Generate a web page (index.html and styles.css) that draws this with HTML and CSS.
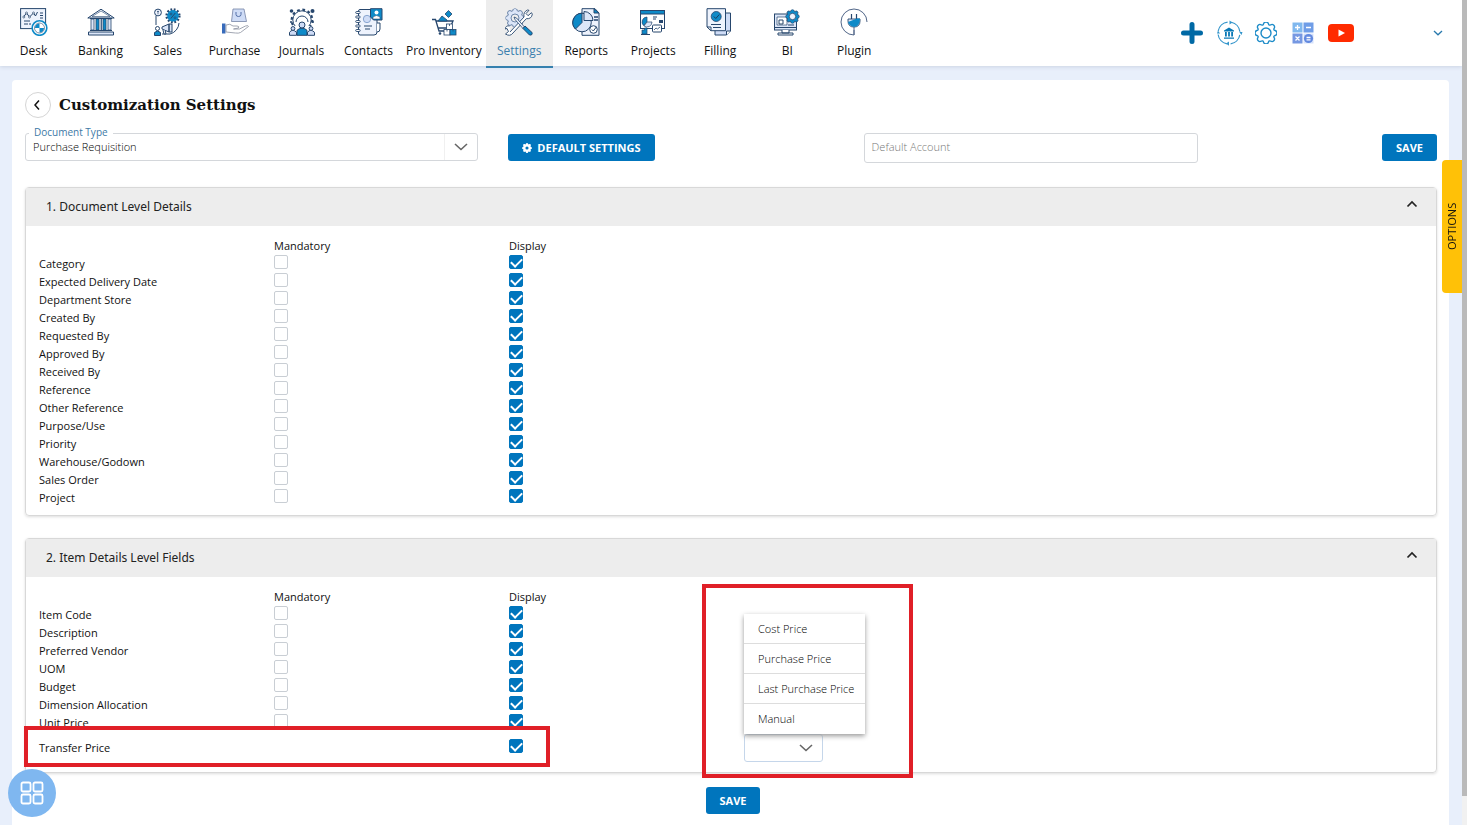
FILE: index.html
```html
<!DOCTYPE html>
<html lang="en">
<head>
<meta charset="utf-8">
<title>Customization Settings</title>
<link rel="stylesheet" href="styles.css">
</head>
<body>
<svg class="defs" aria-hidden="true">
  <symbol id="cog" viewBox="0 0 16 16"><path d="M9.796 1.343c-.527-1.79-3.065-1.79-3.592 0l-.094.319a.873.873 0 0 1-1.255.52l-.292-.16c-1.64-.892-3.433.902-2.54 2.541l.159.292a.873.873 0 0 1-.52 1.255l-.319.094c-1.79.527-1.79 3.065 0 3.592l.319.094a.873.873 0 0 1 .52 1.255l-.16.292c-.892 1.64.901 3.434 2.541 2.54l.292-.159a.873.873 0 0 1 1.255.52l.094.319c.527 1.79 3.065 1.79 3.592 0l.094-.319a.873.873 0 0 1 1.255-.52l.292.16c1.64.893 3.434-.902 2.54-2.541l-.159-.292a.873.873 0 0 1 .52-1.255l.319-.094c1.79-.527 1.79-3.065 0-3.592l-.319-.094a.873.873 0 0 1-.52-1.255l.16-.292c.893-1.64-.902-3.433-2.541-2.54l-.292.159a.873.873 0 0 1-1.255-.52z"/></symbol>
</svg>
<header class="topbar">
  <nav class="nav">
    <a class="nav-item" href="#"><svg class="nav-icon" viewBox="0 0 28 28"><rect x=".6" y=".6" width="25" height="20" fill="#eef3fd" stroke="#26466d"/><path d="M3.5 9l3-4 3 4 4-4 2 3 2-4" fill="none" stroke="#26466d"/><g fill="#fff" stroke="#26466d" stroke-width=".7"><circle cx="3.8" cy="9" r="1"/><circle cx="6.5" cy="5" r="1"/><circle cx="9.5" cy="9" r="1"/><circle cx="13.5" cy="5" r="1"/></g><path d="M20 5h3M20 7.500h3M20 10h3M4 13h6M4 16h4M9 16h2" stroke="#26466d"/><circle cx="19.500" cy="20" r="7.300" fill="#fff" stroke="#0e8ac8" stroke-width="1.600"/><path d="M19.500 20V15.500A4.500 4.500 0 0 0 15 20zM19.500 20v4.500A4.500 4.500 0 0 0 24 20z" fill="#0e8ac8"/><circle cx="19.500" cy="20" r="5" fill="none" stroke="#26466d" stroke-width=".6"/></svg>Desk</a>
    <a class="nav-item" href="#"><svg class="nav-icon" viewBox="0 0 28 28"><path d="M.8 10L14 1.200 27.200 10z" fill="#eef3fd" stroke="#26466d"/><path d="M5 8.500L14 3l9 5.500z" fill="#fff" stroke="#26466d" stroke-width=".6"/><path d="M3 10.500h22M1.500 24h25v3h-25zM3 22.500h22" fill="#dce6f8" stroke="#26466d"/><g stroke="#26466d" stroke-width=".8"><path d="M4 11h3v11H4zM14.200 11h.1v11h-.1zM21 11h3v11h-3z" fill="#dce6f8"/><path d="M9 11h3v11H9zM16 11h3v11h-3z" fill="#0e8ac8"/></g></svg>Banking</a>
    <a class="nav-item" href="#"><svg class="nav-icon" viewBox="0 0 28 28"><path d="M2 8v9M25 15a12 12 0 0 1-9 11H8" fill="none" stroke="#26466d"/><circle cx="4" cy="4.500" r="3.400" fill="#eef3fd" stroke="#26466d"/><path d="M4 2.800v3.500M3 3.500h2" stroke="#26466d" stroke-width=".7"/><circle cx="19" cy="7.800" r="6.300" fill="none" stroke="#26466d" stroke-width="2.600" stroke-dasharray="1.700 1.600"/><circle cx="19" cy="7.800" r="5.800" fill="#0e8ac8"/><path d="M16.800 10.500l4.500-5.500" stroke="#26466d"/><circle cx="17" cy="6" r="1" fill="none" stroke="#26466d" stroke-width=".7"/><circle cx="21" cy="9.800" r="1" fill="none" stroke="#26466d" stroke-width=".7"/><path d="M8 19l7-3v8l-7-3zM15 16h3v8h-3z" fill="#dce6f8" stroke="#26466d"/><path d="M9 22l1 4h2l-1-4" fill="#fff" stroke="#26466d"/><circle cx="3.500" cy="20.500" r="2" fill="#fff" stroke="#26466d"/><path d="M.5 27.500v-3q3-3 6 0v3z" fill="#0e8ac8" stroke="#26466d"/></svg>Sales</a>
    <a class="nav-item" href="#"><svg class="nav-icon" viewBox="0 0 28 28"><path d="M12 1h11l2.500 12.500h-15z" fill="#cfdcf6" stroke="#7583a5" stroke-width=".8"/><path d="M15 4v2.500q0 2 2.500 2t2.500-2V4" fill="none" stroke="#536fa8"/><path d="M1 15.500h3.500v10H1z" fill="#386bbb"/><path d="M5 17q4-2 7 1h4q2.500 0 1.500 2l-5 1h6l6-3q3-1 3 .5l-8 6q-2 1-5 .5L5 24z" fill="#fff" stroke="#8a90a0" stroke-width=".8"/></svg>Purchase</a>
    <a class="nav-item" href="#"><svg class="nav-icon" viewBox="0 0 28 28"><circle cx="14" cy="12" r="10.300" fill="none" stroke="#26466d" stroke-width="2.200" stroke-dasharray="2.700 2.700"/><circle cx="14" cy="12" r="9.200" fill="#fff" stroke="#26466d"/><path d="M8 14a6 6 0 0 1 12 0" fill="#fff" stroke="#26466d"/><g fill="#26466d"><circle cx="3.500" cy="3" r="1.800"/><circle cx="24.500" cy="3" r="2"/><circle cx="3" cy="14" r="1"/><circle cx="25" cy="14" r="1"/></g><path d="M2 18h24v10H2z" fill="#fff"/><g stroke="#26466d"><path d="M1.500 27.300v-3q3-4 7 0v3zM19.500 27.300v-3q3-4 7 0v3z" fill="#cfdcf6"/><circle cx="5" cy="20.500" r="1.900" fill="#cfdcf6"/><circle cx="23" cy="20.500" r="1.900" fill="#cfdcf6"/><path d="M9 27.300v-5q5-4.500 10 0v5z" fill="#0e8ac8"/><circle cx="14" cy="17" r="3" fill="#cfdcf6"/></g></svg>Journals</a>
    <a class="nav-item" href="#"><svg class="nav-icon" viewBox="0 0 28 28"><path d="M3.500 3q0-1.500 1.500-1.500h17V24q0 3-3 3H5q-1.500 0-1.500-2z" fill="#eef3fd" stroke="#26466d"/><path d="M22 15h3v6q0 3-3 3" fill="#fff" stroke="#26466d"/><circle cx="12" cy="11" r="3.700" fill="#cfdcf6" stroke="#7595c7" stroke-width=".8"/><path d="M9 18h8M10 21h5" stroke="#26466d"/><g fill="#fff" stroke="#26466d" stroke-width=".9"><rect x=".7" y="3.500" width="4.500" height="2" rx="1"/><rect x=".7" y="8" width="4.500" height="2" rx="1"/><rect x=".7" y="12.500" width="4.500" height="2" rx="1"/><rect x=".7" y="17" width="4.500" height="2" rx="1"/><rect x=".7" y="21.500" width="4.500" height="2" rx="1"/></g><path d="M15.500.700H27V12H18.500l-3-3z" fill="#0e8ac8" stroke="#26466d"/><circle cx="21.500" cy="4.500" r="2" fill="#fff"/><path d="M18 11V9q3.500-3 7 0v2z" fill="#fff" stroke="#26466d" stroke-width=".5"/></svg>Contacts</a>
    <a class="nav-item" href="#"><svg class="nav-icon" viewBox="0 0 28 28"><path d="M2 11.500h3.500L9 23h12M6 13h17l-3 7H8" fill="none" stroke="#26466d" stroke-width="1.300"/><path d="M8 13l4-5 5 4v1zM15 6l3.500-3.500L22 6l-3.500 3.500z" fill="#0e8ac8" stroke="#26466d" stroke-width=".8"/><circle cx="10" cy="25.500" r="1.300" fill="#26466d"/><g stroke="#26466d" stroke-width=".8"><rect x="16.500" y="16" width="6" height="5.500" fill="#fff"/><rect x="14" y="21.500" width="6" height="5.500" fill="#fff"/><rect x="20" y="21.500" width="6" height="5.500" fill="#0e8ac8"/><path d="M19.500 16v2M17 21.500v2M23 21.500v2"/></g></svg>Pro Inventory</a>
    <a class="nav-item nav-active" href="#"><svg class="nav-icon" viewBox="0 0 28 28"><use href="#cog" x=".5" y=".5" width="19" height="19" fill="#dce6f8" stroke="#4f6e98" stroke-width=".8"/><circle cx="10" cy="10" r="4" fill="#eee" stroke="#4f6e98" stroke-width=".8"/><path d="M5 24l14-15q-1-5 3.500-7l1.500.3-3 3.200 2 2.200 3.500-3 .8 1.500q-.8 5-6 4.500L8 25q-3 4-7.500 1l3-2.500-1.500-3-2 .5q1-4 4.500-3" fill="#fff" stroke="#26466d" stroke-width=".9"/><path d="M9 9l2.500 1 8 9-1.500 1.500-8-9z" fill="#eef3fd" stroke="#26466d" stroke-width=".8"/><path d="M18 20.500l2-2.500 7 6.500q.8 3-2.500 2.500z" fill="#0e8ac8" stroke="#26466d"/></svg>Settings</a>
    <a class="nav-item" href="#"><svg class="nav-icon" viewBox="0 0 28 28"><path d="M10 .700h13l4 4.300v22.300H10z" fill="#eef3fd" stroke="#26466d"/><path d="M22 .700V5h5z" fill="#0e8ac8" stroke="#26466d"/><path d="M22 9h4M22 12h4" stroke="#26466d" stroke-width="1.300"/><circle cx="21.500" cy="21.500" r="3.800" fill="#fff" stroke="#26466d"/><path d="M19.800 21.500l1.500 1.500 3-4" fill="none" stroke="#26466d"/><circle cx="10" cy="14.500" r="9.300" fill="#dce6f8" stroke="#26466d"/><path d="M10 14.500V5.200A9.300 9.300 0 0 0 3.500 21z" fill="#0e8ac8" stroke="#26466d"/><path d="M12 12.500V3.500a9 9 0 0 1 9 9z" fill="#dce6f8" stroke="#26466d"/></svg>Reports</a>
    <a class="nav-item" href="#"><svg class="nav-icon" viewBox="0 0 28 28"><rect x="1.500" y="2.500" width="24" height="18" fill="#fff" stroke="#26466d"/><path d="M1.500 2.500h24v3.500h-24z" fill="#0e8ac8" stroke="#26466d"/><path d="M8 14V9a5 5 0 0 0-3.500 8.500z" fill="#0e8ac8" stroke="#26466d" stroke-width=".7"/><path d="M8 14h5a5 5 0 0 1-8 4z" fill="#dce6f8" stroke="#26466d" stroke-width=".7"/><path d="M14 9h4M14 11h3" stroke="#26466d"/><path d="M20 12h4v3h-4z" fill="#26466d"/><rect x="13.500" y="17" width="9" height="7" rx="1" fill="#fff" stroke="#26466d"/><path d="M15 22l2-2 1.500 1 2.500-2" fill="none" stroke="#26466d" stroke-width=".8"/><path d="M3 26v-4h2.500v-2H8v6z" fill="#0e8ac8" stroke="#26466d" stroke-width=".7"/><path d="M2 26.500h9" stroke="#26466d"/></svg>Projects</a>
    <a class="nav-item" href="#"><svg class="nav-icon" viewBox="0 0 28 28"><path d="M9 5h15.500v18l-4 4H9z" fill="#cfdcf6" stroke="#26466d"/><path d="M20.500 27v-4h4" fill="#fff" stroke="#26466d"/><path d="M1 .700h18.500v22H5L1 19z" fill="#eef3fd" stroke="#26466d"/><path d="M1 19h4v3.700z" fill="#fff" stroke="#26466d"/><circle cx="10.200" cy="8.500" r="5" fill="#0e8ac8" stroke="#26466d" stroke-width=".8"/><path d="M7.800 8.500l2 2 3.500-4" fill="none" stroke="#173d61"/><path d="M5 16.500h10M7 19.500h8" stroke="#26466d"/></svg>Filling</a>
    <a class="nav-item" href="#"><svg class="nav-icon" viewBox="0 0 28 28"><rect x="1.500" y="6" width="22" height="16" fill="#dce6f8" stroke="#26466d"/><path d="M4 9h10v8H4z" fill="#fff" stroke="#26466d" stroke-width=".7"/><path d="M6 12h4v4H6zM15 17h6" fill="#fff" stroke="#26466d"/><path d="M1.500 19.500h22M9 22v3h7v-3M5 25h15v2H5z" fill="#fff" stroke="#26466d"/><use href="#cog" x="12.500" y="1.500" width="14" height="14" fill="#0e8ac8" stroke="#26466d" stroke-width="1"/><circle cx="19.500" cy="8.500" r="3.200" fill="#eef3fd" stroke="#26466d" stroke-width=".8"/></svg>BI</a>
    <a class="nav-item" href="#"><svg class="nav-icon" viewBox="0 0 28 28"><path d="M27 14A13 13 0 1 0 14 27v-5" fill="none" stroke="#526789"/><path d="M11.500 6v5M16.500 6v5" stroke="#26466d" stroke-width="1.200"/><path d="M8 11h12v2q0 6-6 6t-6-6z" fill="#dce6f8" stroke="#26466d" stroke-width=".9"/><path d="M14 19q-5-1-6-5l9-3.500h3q0 8-6 8.500z" fill="#0e8ac8"/><path d="M14 19v8" stroke="#526789"/></svg>Plugin</a>
  </nav>
  <div class="tools">
    <button class="tool" aria-label="Add"><svg viewBox="0 0 26 26"><path d="M12 4.500v17M3.500 13h17" stroke="#0069a5" stroke-width="5" stroke-linecap="round"/></svg></button>
    <button class="tool" aria-label="Bank sync"><svg viewBox="0 0 26 26"><circle cx="12" cy="13" r="11" fill="none" stroke="#3395cb" stroke-width="1.200" stroke-dasharray="13.500 3.780" stroke-dashoffset="-2"/><path d="M12.500.500L15.500 2.500l-3 2zM22.300 12l2.200 3 1-3zM12 21.500l-3 2 3 2.200zM0 13.500L1 10.500l2 3z" fill="#3395cb"/><path d="M7 10.500L12 7.500l5 3v1H7zM8 12h1.800v4.500H8zM11.100 12h1.800v4.500h-1.800zM14.200 12H16v4.500h-1.800zM7 17.500h10v1.300H7z" fill="#0878b6"/></svg></button>
    <button class="tool" aria-label="Configuration"><svg viewBox="0 0 26 26"><use href="#cog" x="1" y="2" width="22" height="22" fill="none" stroke="#1c8bc8" stroke-width="1"/><circle cx="12" cy="13" r="5" fill="none" stroke="#1c8bc8" stroke-width="1.400"/></svg></button>
    <button class="tool" aria-label="Calculator"><svg viewBox="0 0 26 26"><path d="M1.500 2.500h10v10h-10z" fill="#80b8ee"/><path d="M12.500 2.500h10v10h-10z" fill="#6f9de7"/><path d="M1.500 13.500h10v10h-10z" fill="#7698e2"/><path d="M12.500 13.500h10v10h-10z" fill="#d4e0fa"/><circle cx="17.500" cy="18.500" r="4.600" fill="#6289df"/><path d="M6.500 5v5M4 7.500h5M15 7.500h5M4.500 16.500l4 4M8.500 16.500l-4 4M15.500 17.500h4M15.500 19.800h4" stroke="#fff" stroke-width="1.300"/></svg></button>
    <button class="tool" aria-label="Video tutorials"><svg viewBox="0 0 26 26"><rect x="0" y="4" width="26" height="18" rx="4" fill="#ff2b00"/><path d="M10.500 9.500v7l6.500-3.500z" fill="#fff"/></svg></button>
    <button class="profile" aria-label="Account menu"><svg viewBox="0 0 10 6"><path d="M1 1l4 3.800L9 1" fill="none" stroke="#2879ad" stroke-width="1.300"/></svg></button>
  </div>
</header>

<main class="panel">
  <div class="heading">
    <button class="back" aria-label="Back"><svg viewBox="0 0 8 12"><path d="M5 1.500L1 6l4 4.500" fill="none" stroke="#111" stroke-width="1.500"/></svg></button>
    <h1>Customization Settings</h1>
  </div>
  <div class="controls">
    <div class="outlined">
      <label for="doc-type">Document Type</label>
      <select id="doc-type"><option>Purchase Requisition</option></select>
      <span class="arrow"><svg viewBox="0 0 14 8"><path d="M1 1l6 5.500L13 1" fill="none" stroke="#666" stroke-width="1.600"/></svg></span>
    </div>
    <div><button class="btn"><svg class="btn-icon" viewBox="0 0 16 16"><use href="#cog" width="16" height="16" fill="#fff"/><circle cx="8" cy="8" r="2.500" fill="#0075bd"/></svg>DEFAULT SETTINGS</button></div>
    <input class="account" type="text" placeholder="Default Account" aria-label="Default Account">
    <div class="end"><button class="btn">SAVE</button></div>
  </div>

  <section class="card">
    <button class="card-head"><span>1. Document Level Details</span><svg viewBox="0 0 12 8"><path d="M1.500 6.500L6 2l4.500 4.500" fill="none" stroke="#222" stroke-width="1.700"/></svg></button>
    <div class="card-body">
      <table class="fields">
        <thead><tr><td></td><th scope="col">Mandatory</th><th scope="col">Display</th><td></td></tr></thead>
        <tbody>
          <tr><th scope="row">Category</th><td><input type="checkbox" aria-label="Category mandatory"></td><td><input type="checkbox" aria-label="Category display" checked></td><td></td></tr>
          <tr><th scope="row">Expected Delivery Date</th><td><input type="checkbox" aria-label="Expected Delivery Date mandatory"></td><td><input type="checkbox" aria-label="Expected Delivery Date display" checked></td><td></td></tr>
          <tr><th scope="row">Department Store</th><td><input type="checkbox" aria-label="Department Store mandatory"></td><td><input type="checkbox" aria-label="Department Store display" checked></td><td></td></tr>
          <tr><th scope="row">Created By</th><td><input type="checkbox" aria-label="Created By mandatory"></td><td><input type="checkbox" aria-label="Created By display" checked></td><td></td></tr>
          <tr><th scope="row">Requested By</th><td><input type="checkbox" aria-label="Requested By mandatory"></td><td><input type="checkbox" aria-label="Requested By display" checked></td><td></td></tr>
          <tr><th scope="row">Approved By</th><td><input type="checkbox" aria-label="Approved By mandatory"></td><td><input type="checkbox" aria-label="Approved By display" checked></td><td></td></tr>
          <tr><th scope="row">Received By</th><td><input type="checkbox" aria-label="Received By mandatory"></td><td><input type="checkbox" aria-label="Received By display" checked></td><td></td></tr>
          <tr><th scope="row">Reference</th><td><input type="checkbox" aria-label="Reference mandatory"></td><td><input type="checkbox" aria-label="Reference display" checked></td><td></td></tr>
          <tr><th scope="row">Other Reference</th><td><input type="checkbox" aria-label="Other Reference mandatory"></td><td><input type="checkbox" aria-label="Other Reference display" checked></td><td></td></tr>
          <tr><th scope="row">Purpose/Use</th><td><input type="checkbox" aria-label="Purpose/Use mandatory"></td><td><input type="checkbox" aria-label="Purpose/Use display" checked></td><td></td></tr>
          <tr><th scope="row">Priority</th><td><input type="checkbox" aria-label="Priority mandatory"></td><td><input type="checkbox" aria-label="Priority display" checked></td><td></td></tr>
          <tr><th scope="row">Warehouse/Godown</th><td><input type="checkbox" aria-label="Warehouse/Godown mandatory"></td><td><input type="checkbox" aria-label="Warehouse/Godown display" checked></td><td></td></tr>
          <tr><th scope="row">Sales Order</th><td><input type="checkbox" aria-label="Sales Order mandatory"></td><td><input type="checkbox" aria-label="Sales Order display" checked></td><td></td></tr>
          <tr><th scope="row">Project</th><td><input type="checkbox" aria-label="Project mandatory"></td><td><input type="checkbox" aria-label="Project display" checked></td><td></td></tr>
        </tbody>
      </table>
    </div>
  </section>

  <section class="card">
    <button class="card-head"><span>2. Item Details Level Fields</span><svg viewBox="0 0 12 8"><path d="M1.500 6.500L6 2l4.500 4.500" fill="none" stroke="#222" stroke-width="1.700"/></svg></button>
    <div class="card-body">
      <table class="fields">
        <thead><tr><td></td><th scope="col">Mandatory</th><th scope="col">Display</th><td></td></tr></thead>
        <tbody>
          <tr><th scope="row">Item Code</th><td><input type="checkbox" aria-label="Item Code mandatory"></td><td><input type="checkbox" aria-label="Item Code display" checked></td><td></td></tr>
          <tr><th scope="row">Description</th><td><input type="checkbox" aria-label="Description mandatory"></td><td><input type="checkbox" aria-label="Description display" checked></td><td></td></tr>
          <tr><th scope="row">Preferred Vendor</th><td><input type="checkbox" aria-label="Preferred Vendor mandatory"></td><td><input type="checkbox" aria-label="Preferred Vendor display" checked></td><td></td></tr>
          <tr><th scope="row">UOM</th><td><input type="checkbox" aria-label="UOM mandatory"></td><td><input type="checkbox" aria-label="UOM display" checked></td><td></td></tr>
          <tr><th scope="row">Budget</th><td><input type="checkbox" aria-label="Budget mandatory"></td><td><input type="checkbox" aria-label="Budget display" checked></td><td></td></tr>
          <tr><th scope="row">Dimension Allocation</th><td><input type="checkbox" aria-label="Dimension Allocation mandatory"></td><td><input type="checkbox" aria-label="Dimension Allocation display" checked></td><td></td></tr>
          <tr><th scope="row">Unit Price</th><td><input type="checkbox" aria-label="Unit Price mandatory"></td><td><input type="checkbox" aria-label="Unit Price display" checked></td><td></td></tr>
          <tr class="transfer"><th scope="row">Transfer Price</th><td></td><td><input type="checkbox" aria-label="Transfer Price display" checked></td>
            <td><div class="price">
              <select aria-label="Transfer price source"><option></option></select>
              <span class="arrow"><svg viewBox="0 0 14 8"><path d="M1 1l6 5.500L13 1" fill="none" stroke="#666" stroke-width="1.600"/></svg></span>
              <ul class="menu" role="listbox" aria-label="Transfer price source">
                <li role="option">Cost Price</li><li role="option">Purchase Price</li><li role="option">Last Purchase Price</li><li role="option">Manual</li>
              </ul>
            </div></td></tr>
        </tbody>
      </table>
      <div class="mark mark-row"></div>
      <div class="mark mark-menu"></div>
    </div>
  </section>
  <div class="footer"><button class="btn">SAVE</button></div>
</main>

<button class="options">OPTIONS</button>
<button class="apps" aria-label="Apps"><svg viewBox="0 0 24 24"><g fill="none" stroke="#fff" stroke-width="1.800"><rect x="1.500" y="1.500" width="9" height="9" rx="1.500"/><rect x="13.500" y="1.500" width="9" height="9" rx="1.500"/><rect x="1.500" y="13.500" width="9" height="9" rx="1.500"/><rect x="13.500" y="13.500" width="9" height="9" rx="1.500"/></g></svg></button>
<div class="scrollbar"><div class="thumb"></div></div>
</body>
</html>
```

FILE: styles.css
```css
* { box-sizing: border-box; }
body {
  margin: 0;
  height: 100vh;
  overflow: hidden;
  padding-right: 5px;
  display: flex;
  flex-direction: column;
  background: #e8effb;
  color: #111;
  font: 400 11px/16px "Open Sans", "Noto Sans", sans-serif;
}
button, input, select { font: inherit; color: inherit; margin: 0; }
button { border: 0; padding: 0; background: none; }
svg { display: block; }
.defs { position: absolute; width: 0; height: 0; }

.topbar {
  display: flex;
  justify-content: space-between;
  flex: none;
  height: 66px;
  background: #fff;
  box-shadow: 0 1px 4px #cbd3e3;
}
.nav { display: flex; }
.nav-item {
  display: flex;
  flex-direction: column;
  align-items: center;
  gap: 7px;
  min-width: 67px;
  height: 68px;
  padding: 8px 4px 0;
  font-size: 12px;
  color: #111;
  text-decoration: none;
  white-space: nowrap;
  z-index: 1;
}
.nav-icon { width: 28px; height: 28px; }
.nav-active { background: #ededed; color: #3c7fae; border-bottom: 2px solid #3580ae; }
.tools { display: flex; align-items: center; gap: 11px; padding-right: 19px; }
.tool { width: 26px; height: 26px; }
.profile { width: 10px; margin-left: 68px; }

.panel {
  flex: 1;
  margin: 14px 13px 0 12px;
  padding: 11px 12px 0 13px;
  background: #fff;
  border-radius: 4px 4px 0 0;
}
.heading { display: flex; align-items: center; gap: 8px; height: 27px; }
.back {
  display: grid;
  place-items: center;
  width: 26px;
  height: 26px;
  border: 1px solid #d5d5d5;
  border-radius: 50%;
}
.back svg { width: 8px; height: 12px; }
h1 { margin: 0; font: bold 15px/20px "DejaVu Serif", serif; color: #111; }

.controls {
  display: grid;
  grid-template-columns: 453fr 325fr 334fr 209fr;
  gap: 30px;
  height: 30px;
  margin: 15px 0 24px;
}
.outlined { position: relative; height: 28px; }
.outlined label {
  position: absolute;
  left: 4px;
  top: -7px;
  padding: 0 5px;
  background: #fff;
  font-size: 10px;
  line-height: 12px;
  color: #3d79a6;
}
select {
  appearance: none;
  width: 100%;
  height: 28px;
  padding: 0 7px;
  border: 1px solid #d4d7db;
  border-radius: 3px;
  background: #fff;
  font-weight: 300;
  color: #000;
}
.arrow {
  position: absolute;
  top: 1px;
  right: 1px;
  bottom: 1px;
  width: 33px;
  display: grid;
  place-items: center;
  pointer-events: none;
}
.arrow svg { width: 14px; height: 8px; }
.outlined .arrow { border-left: 1px solid #f0f0f0; }
.btn {
  display: inline-flex;
  align-items: center;
  gap: 5px;
  height: 27px;
  padding: 0 14px;
  border-radius: 3px;
  background: #0075bd;
  color: #fff;
  font-weight: 700;
}
.controls .btn { margin-top: 1px; }
.btn-icon { width: 10px; height: 10px; }
.account {
  width: 100%;
  height: 30px;
  padding: 0 7px 3px;
  border: 1px solid #d4d7db;
  border-radius: 3px;
  font-weight: 300;
}
.account::placeholder { color: #777; }
.end { text-align: right; }

.card {
  margin-bottom: 22px;
  border: 1px solid #d8d8d8;
  border-radius: 4px;
  box-shadow: 0 1px 3px #ddd;
}
.card-head {
  display: flex;
  justify-content: space-between;
  align-items: center;
  width: 100%;
  height: 38px;
  padding: 0 18px 0 20px;
  background: #ededed;
  font: 12px/16px "Noto Sans", "Open Sans", sans-serif;
  color: #222;
}
.card-head svg { width: 12px; height: 8px; margin-bottom: 6px; }
.card-body { position: relative; padding: 11px 0 10px; }
.fields { width: 66.667%; table-layout: fixed; border-collapse: collapse; }
.fields th, .fields td { height: 18px; padding: 0 0 0 13px; text-align: left; font-weight: 400; white-space: nowrap; vertical-align: middle; }
.fields thead th, .fields thead td { height: 16px; }
.fields thead th { padding-top: 2px; line-height: 14px; }
.fields tbody th { line-height: 14px; padding-top: 4px; }
.fields input {
  appearance: none;
  display: block;
  width: 14px;
  height: 14px;
  border: 1px solid #c9ced4;
  border-radius: 2px;
}
.fields input:checked { border-color: #0075bd; background: #0075bd; }
.fields input:checked::after {
  content: "";
  display: block;
  width: 9px;
  height: 5px;
  margin: 2px 1px;
  border: solid #fff;
  border-width: 0 0 2px 2px;
  transform: rotate(-45deg);
}
.transfer td, .transfer th { height: 32px; }
.price { position: relative; width: 79px; height: 28px; margin-top: 4px; }
.price select { border-color: #c5d6ea; }
.menu {
  position: absolute;
  left: 0;
  bottom: 28px;
  margin: 0;
  padding: 0;
  list-style: none;
  background: #fff;
  box-shadow: 0 2px 5px #999;
  z-index: 3;
}
.menu li { height: 30px; padding: 0 11px 0 14px; line-height: 30px; font-weight: 300; border-bottom: 1px solid #ddd; color: #000; }
.menu li:last-child { border-bottom: 0; }
.mark { position: absolute; border: 4px solid #e01f27; pointer-events: none; z-index: 2; }
.mark-row { left: -2px; width: 526px; bottom: 5px; height: 41px; }
.mark-menu { left: 676px; width: 211px; bottom: -6px; height: 194px; }
.footer { text-align: center; margin-top: -8px; padding-left: 4px; }

.options {
  position: fixed;
  right: 5px;
  top: 160px;
  width: 20px;
  height: 133px;
  border-radius: 0 4px 4px 0;
  background: #ffc107;
  writing-mode: vertical-rl;
  rotate: 180deg;
}
.apps {
  position: fixed;
  left: 8px;
  bottom: 8px;
  width: 48px;
  height: 48px;
  display: grid;
  place-items: center;
  border-radius: 50%;
  background: #7fb7f0;
}
.apps svg { width: 24px; height: 24px; }
.scrollbar { position: fixed; top: 0; right: 0; bottom: 0; width: 5px; background: #f1f1f1; }
.thumb { height: 96.5%; background: #bababa; }
```
